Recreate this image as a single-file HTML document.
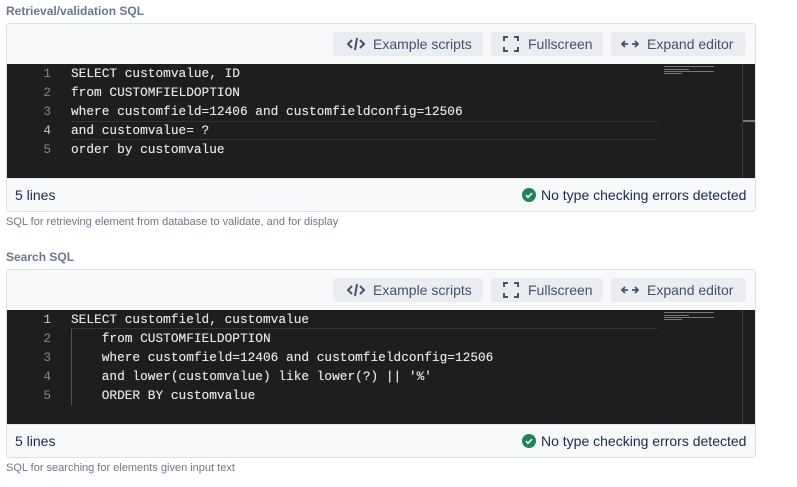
<!DOCTYPE html>
<html><head><style>
*{margin:0;padding:0;box-sizing:border-box}
body{width:797px;height:487px;background:#fff;font-family:"Liberation Sans",sans-serif;position:relative;overflow:hidden}
.lbl{position:absolute;left:6px;font-size:12px;font-weight:bold;color:#6b778c}
.cap{position:absolute;left:6px;font-size:11px;color:#6b778c}
.box{position:absolute;left:6px;width:750px;height:189px;border:1px solid #dfe1e6;border-radius:3px;background:#f7f8f9;overflow:hidden}
.btn{position:absolute;top:8px;height:24px;background:#ebecf0;border-radius:3px;font-size:14px;color:#42526e;line-height:24px}
.btn svg{position:absolute;top:4px}
.ed{position:absolute;left:0;top:40px;width:748px;height:114px;background:#1e1e1e;font-family:"Liberation Mono",monospace;font-size:12.8px;color:#e2e2e2}
.ln{position:absolute;left:0;width:44px;text-align:right;color:#858585;height:19px;line-height:19px}
.cd{position:absolute;left:64px;white-space:pre;height:19px;line-height:19px;text-shadow:0 0 0.4px #e2e2e2}
.foot{position:absolute;left:0;top:154px;width:748px;height:34px;background:#f7f8f9;border-top:1px solid #e4e6ea;font-size:14px;color:#172b4d}
.vs{position:absolute;left:735px;top:0;width:1px;height:114px;background:#3a3a3a}
.mm{position:absolute;left:657px;width:50px;height:1px;background:#777}
</style></head><body>
<div class="lbl" style="top:4px">Retrieval/validation SQL</div>
<div class="box" style="top:23px">
 <div class="btn" style="left:326px;width:150px"><svg style="left:13px" width="20" height="16" viewBox="0 0 20 16" fill="none" stroke="#42526e" stroke-width="2"><path d="M6 4L2 8l4 4M14 4l4 4-4 4M11 2L9 14"/></svg><span style="position:absolute;left:40px">Example scripts</span></div>
 <div class="btn" style="left:484px;width:112px"><svg style="left:12px" width="16" height="16" viewBox="0 0 16 16" fill="none" stroke="#42526e" stroke-width="2"><path d="M1 5V1h4M11 1h4v4M15 11v4h-4M5 15H1v-4"/></svg><span style="position:absolute;left:37px">Fullscreen</span></div>
 <div class="btn" style="left:604px;width:135px"><svg style="left:10px" width="18" height="16" viewBox="0 0 18 16" fill="none" stroke="#42526e" stroke-width="1.8"><path d="M4 5L1 8l3 3M1 8h6M14 5l3 3-3 3M17 8h-6"/></svg><span style="position:absolute;left:36px">Expand editor</span></div>
 <div class="ed">
  <div class="mm" style="top:2px"></div><div class="mm" style="top:5px;width:25px"></div><div class="mm" style="top:7px"></div><div class="mm" style="top:9px;width:18px"></div>
  <div style="position:absolute;left:64px;top:57px;width:586px;height:19px;border-top:1px solid #333;border-bottom:1px solid #333"></div>
  <div class="vs"></div><div style="position:absolute;left:736px;top:56px;width:12px;height:2px;background:#777"></div>
  <div class="ln" style="top:0">1</div><div class="cd" style="top:0">SELECT customvalue, ID</div>
  <div class="ln" style="top:19px">2</div><div class="cd" style="top:19px">from CUSTOMFIELDOPTION</div>
  <div class="ln" style="top:38px">3</div><div class="cd" style="top:38px">where customfield=12406 and customfieldconfig=12506</div>
  <div class="ln" style="top:57px;color:#c6c6c6">4</div><div class="cd" style="top:57px">and customvalue= ?</div>
  <div class="ln" style="top:76px">5</div><div class="cd" style="top:76px">order by customvalue</div>
 </div>
 <div class="foot"><span style="position:absolute;left:8px;top:8px">5 lines</span>
  <svg style="position:absolute;left:515px;top:9px" width="14" height="14" viewBox="0 0 14 14"><circle cx="7" cy="7" r="7" fill="#1f845a"/><path d="M4 7.2l2 2 4-4" stroke="#fff" stroke-width="1.6" fill="none"/></svg>
  <span style="position:absolute;left:534px;top:8px">No type checking errors detected</span></div>
</div>
<div class="cap" style="top:216px">SQL for retrieving element from database to validate, and for display</div>

<div class="lbl" style="top:250px">Search SQL</div>
<div class="box" style="top:269px">
 <div class="btn" style="left:326px;width:150px"><svg style="left:13px" width="20" height="16" viewBox="0 0 20 16" fill="none" stroke="#42526e" stroke-width="2"><path d="M6 4L2 8l4 4M14 4l4 4-4 4M11 2L9 14"/></svg><span style="position:absolute;left:40px">Example scripts</span></div>
 <div class="btn" style="left:484px;width:112px"><svg style="left:12px" width="16" height="16" viewBox="0 0 16 16" fill="none" stroke="#42526e" stroke-width="2"><path d="M1 5V1h4M11 1h4v4M15 11v4h-4M5 15H1v-4"/></svg><span style="position:absolute;left:37px">Fullscreen</span></div>
 <div class="btn" style="left:604px;width:135px"><svg style="left:10px" width="18" height="16" viewBox="0 0 18 16" fill="none" stroke="#42526e" stroke-width="1.8"><path d="M4 5L1 8l3 3M1 8h6M14 5l3 3-3 3M17 8h-6"/></svg><span style="position:absolute;left:36px">Expand editor</span></div>
 <div class="ed">
  <div class="mm" style="top:2px"></div><div class="mm" style="top:5px;width:25px"></div><div class="mm" style="top:7px"></div><div class="mm" style="top:9px;width:18px"></div>
  <div style="position:absolute;left:64px;top:0;width:586px;height:19px;border-bottom:1px solid #333"></div>
  <div style="position:absolute;left:64px;top:19px;width:1px;height:76px;background:#555"></div>
  <div class="vs"></div>
  <div class="ln" style="top:0;color:#c6c6c6">1</div><div class="cd" style="top:0">SELECT customfield, customvalue</div>
  <div class="ln" style="top:19px">2</div><div class="cd" style="top:19px">    from CUSTOMFIELDOPTION</div>
  <div class="ln" style="top:38px">3</div><div class="cd" style="top:38px">    where customfield=12406 and customfieldconfig=12506</div>
  <div class="ln" style="top:57px">4</div><div class="cd" style="top:57px">    and lower(customvalue) like lower(?) || '%'</div>
  <div class="ln" style="top:76px">5</div><div class="cd" style="top:76px">    ORDER BY customvalue</div>
 </div>
 <div class="foot"><span style="position:absolute;left:8px;top:8px">5 lines</span>
  <svg style="position:absolute;left:515px;top:9px" width="14" height="14" viewBox="0 0 14 14"><circle cx="7" cy="7" r="7" fill="#1f845a"/><path d="M4 7.2l2 2 4-4" stroke="#fff" stroke-width="1.6" fill="none"/></svg>
  <span style="position:absolute;left:534px;top:8px">No type checking errors detected</span></div>
</div>
<div class="cap" style="top:462px">SQL for searching for elements given input text</div>
</body></html>
